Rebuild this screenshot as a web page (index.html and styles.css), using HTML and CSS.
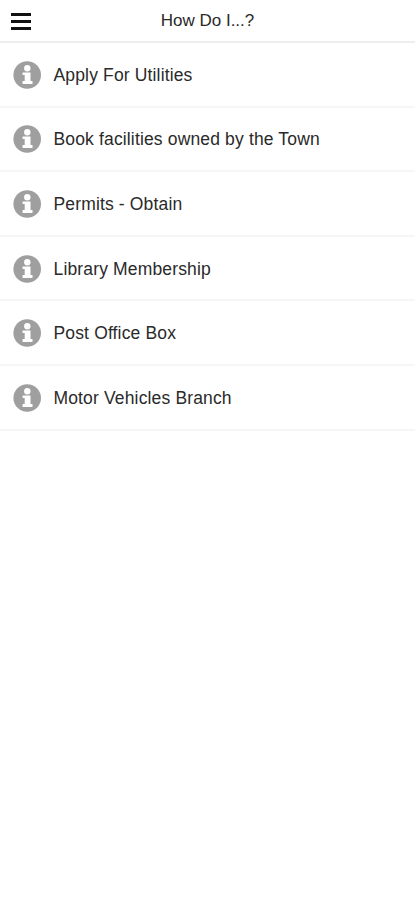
FILE: index.html
```html
<!DOCTYPE html>
<html lang="en">
<head>
    <meta charset="UTF-8">
    <meta name="viewport" content="width=device-width, initial-scale=1.0">
    <title>How Do I...?</title>
    <link rel="stylesheet" href="styles.css">
</head>
<body>
    <!-- Shared info icon -->
    <svg class="sprite" width="0" height="0" aria-hidden="true">
        <symbol id="info" viewBox="0 0 28 28">
            <circle cx="14.2" cy="14" r="13.8" fill="#9f9f9f"/>
            <circle cx="14.3" cy="7.2" r="3.2" fill="#fff"/>
            <path d="M9.6 11.4h7.9v8.7h2v2.8H9.6v-2.8h2.1v-6H9.6z" fill="#fff"/>
        </symbol>
    </svg>

    <header class="header">
        <button class="menu-button" aria-label="Menu">
            <span></span>
            <span></span>
            <span></span>
        </button>
        <h1>How Do I...?</h1>
    </header>

    <ul class="list">
        <li><svg class="icon"><use href="#info"/></svg><span class="label">Apply For Utilities</span></li>
        <li><svg class="icon"><use href="#info"/></svg><span class="label">Book facilities owned by the Town</span></li>
        <li><svg class="icon"><use href="#info"/></svg><span class="label">Permits - Obtain</span></li>
        <li><svg class="icon"><use href="#info"/></svg><span class="label">Library Membership</span></li>
        <li><svg class="icon"><use href="#info"/></svg><span class="label">Post Office Box</span></li>
        <li><svg class="icon"><use href="#info"/></svg><span class="label">Motor Vehicles Branch</span></li>
    </ul>
</body>
</html>
```
FILE: styles.css
```css
body {
    margin: 0;
    background: #fff;
    color: #2a2a2a;
    font-family: "Liberation Sans", Arial, sans-serif;
}
.sprite {
    display: block;
}
.header {
    display: grid;
    grid-template-columns: 42px 1fr 42px;
    align-items: center;
    height: 41px;
    border-bottom: 2px solid #eee;
}
.menu-button {
    display: flex;
    flex-direction: column;
    gap: 4px;
    width: 20px;
    margin: 1px 0 0 11px;
    padding: 0;
    border: none;
    background: none;
}
.menu-button span {
    height: 3px;
    background: #111;
}
h1 {
    margin: 0;
    font-size: 17px;
    font-weight: normal;
    line-height: 39px;
    text-align: center;
}
.list {
    margin: 0;
    padding: 0;
    list-style: none;
}
.list li {
    display: flex;
    align-items: center;
    gap: 12.5px;
    box-sizing: border-box;
    height: 64.6px;
    padding: 1px 0 0 13px;
    border-bottom: 2px solid #f6f6f6;
}
.icon {
    width: 28px;
    height: 28px;
}
.label {
    padding-top: 1px;
    font-size: 17.5px;
    letter-spacing: 0.15px;
}
```
